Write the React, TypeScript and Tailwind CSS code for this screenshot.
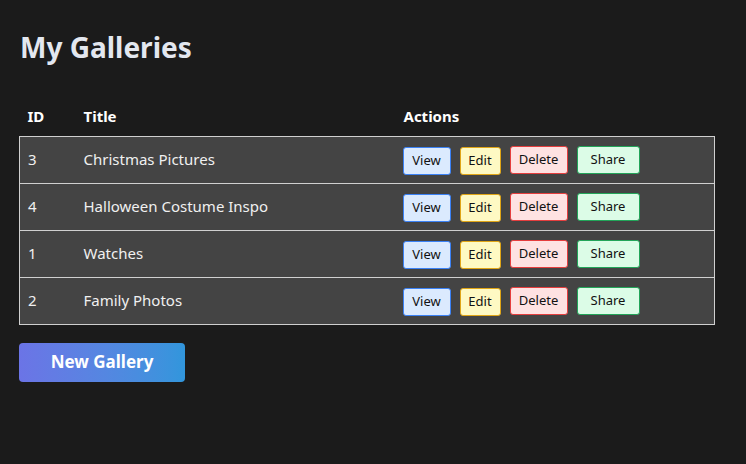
import React from "react";

const rows = [
  { id: 3, title: "Christmas Pictures" },
  { id: 4, title: "Halloween Costume Inspo" },
  { id: 1, title: "Watches" },
  { id: 2, title: "Family Photos" },
];

function Btn({ label, cls }: { label: string; cls: string }) {
  return (
    <button
      className={`h-[28px] rounded-[3px] border text-[13px] text-[#111] leading-none ${cls}`}
    >
      {label}
    </button>
  );
}

export default function App() {
  return (
    <div
      className="w-[746px] h-[464px] bg-[#1b1b1b] text-white"
      style={{ fontFamily: '"Segoe UI", "Noto Sans", "Open Sans", sans-serif' }}
    >
      <div className="pl-[19px] pt-[28px]">
        <h1 className="text-[28px] font-bold text-[#e3e7ef] leading-[38px] pl-[1px]">
          My Galleries
        </h1>
        <table className="mt-[30px] w-[696px] border-collapse text-[15px]">
          <thead>
            <tr className="h-[40px]">
              <th className="text-left font-bold pl-[8px] w-[56px]">ID</th>
              <th className="text-left font-bold pl-[8px] w-[320px]">Title</th>
              <th className="text-left font-bold pl-[8px]">Actions</th>
            </tr>
          </thead>
          <tbody>
            {rows.map((r) => (
              <tr key={r.id} className="h-[47px] bg-[#444444] border border-[#d0d0d0]">
                <td className="pl-[8px] text-[#f0f0f0]">{r.id}</td>
                <td className="pl-[8px] text-[#f0f0f0]">{r.title}</td>
                <td className="pl-[7px]">
                  <div className="flex items-center gap-[9px]">
                    <Btn label="View" cls="w-[48px] bg-[#dbeafe] border-[#3b82f6] mt-[2px]" />
                    <Btn label="Edit" cls="w-[41px] bg-[#fef9c3] border-[#e0a516] mt-[2px]" />
                    <Btn label="Delete" cls="w-[58px] bg-[#fee2e2] border-[#e53e3e]" />
                    <Btn label="Share" cls="w-[63px] bg-[#dcfce7] border-[#22a559]" />
                  </div>
                </td>
              </tr>
            ))}
          </tbody>
        </table>
        <button className="mt-[18px] w-[166px] h-[39px] rounded-[4px] bg-gradient-to-r from-[#6b74e6] to-[#3196dc] text-white font-bold text-[17px]">
          New Gallery
        </button>
      </div>
    </div>
  );
}
